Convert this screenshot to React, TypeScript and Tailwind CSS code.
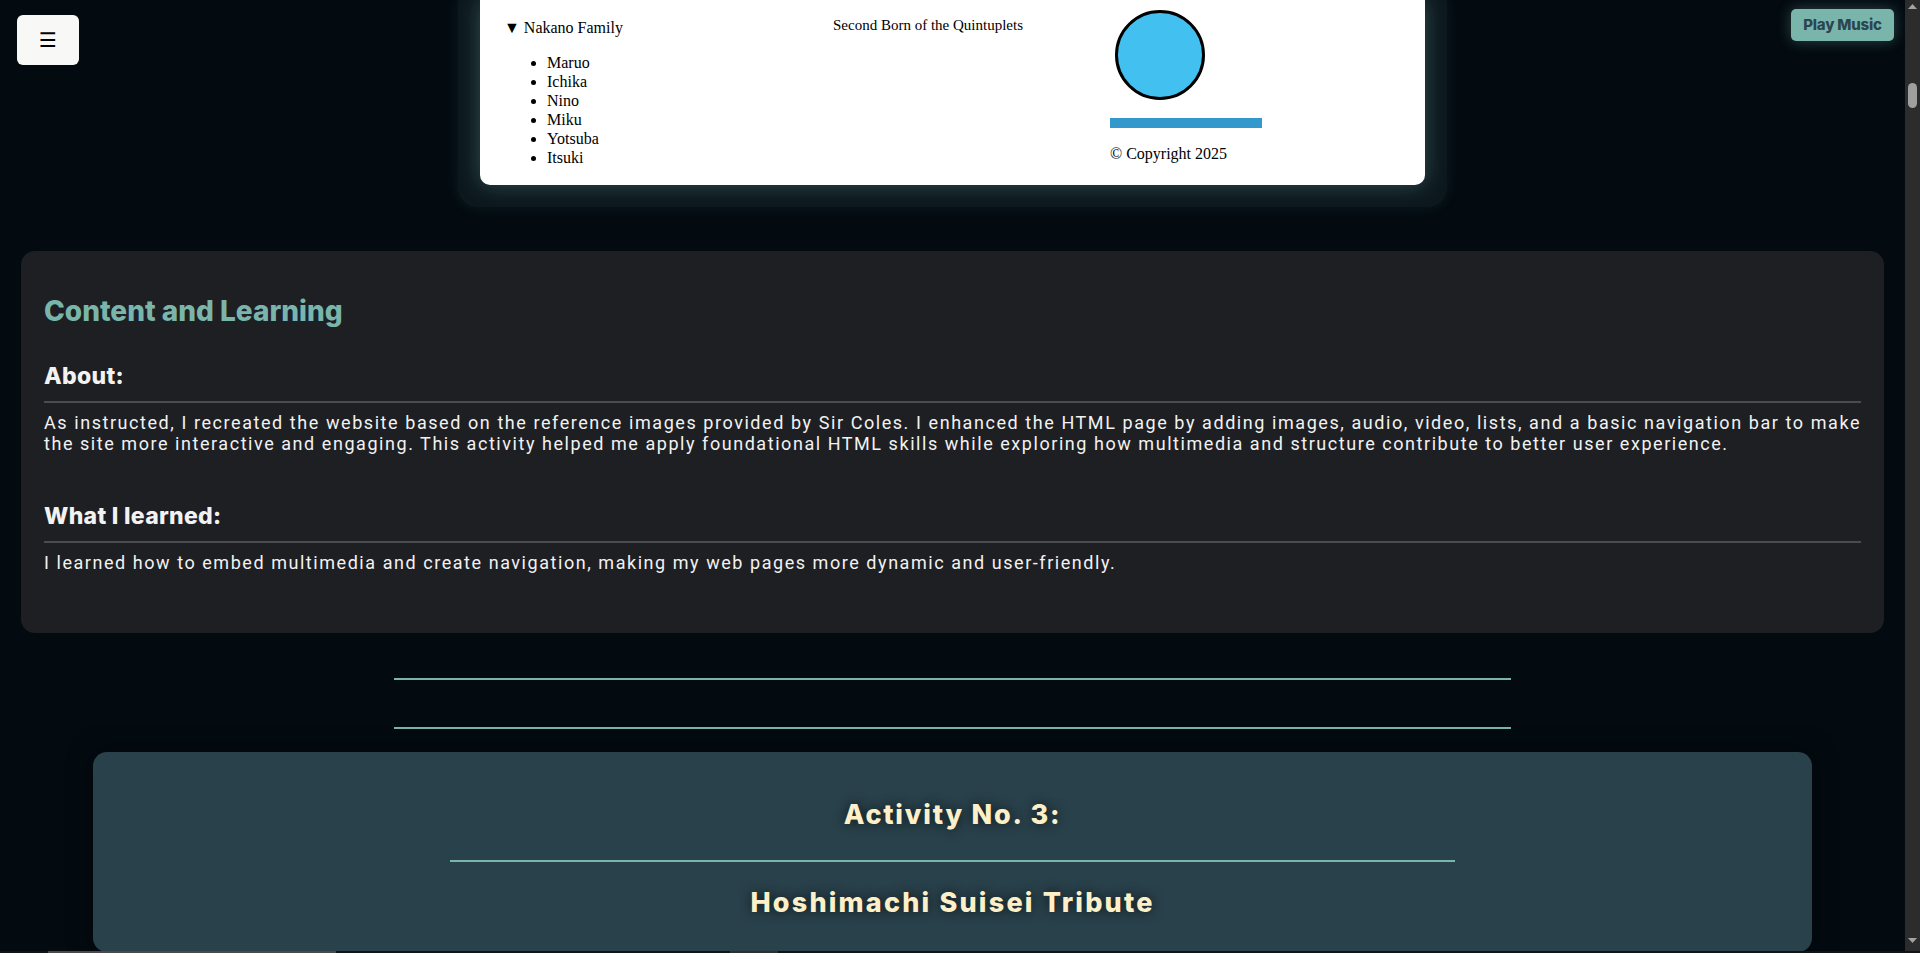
import React from "react";

const family = ["Maruo", "Ichika", "Nino", "Miku", "Yotsuba", "Itsuki"];

function Preview() {
  return (
    <div className="mx-auto w-[989px] shrink-0 rounded-b-[20px] bg-[#0c181e] px-[22px] pb-[22px] shadow-[0_0_14px_rgba(122,181,171,0.1)]">
      <div className="flex h-[185px] rounded-b-[10px] bg-white pl-[27px] font-['Liberation_Serif',serif] text-black shadow-[0_0_22px_rgba(122,181,171,0.35)]">
        <div className="w-[326px] pt-[19px] text-[16px] leading-[18px]">
          <div className="-ml-[3px]">▼ Nakano Family</div>
          <ul className="mt-[16px] list-disc pl-[40px] leading-[19px]">
            {family.map((name) => (
              <li key={name}>{name}</li>
            ))}
          </ul>
        </div>
        <div className="w-[277px] pt-[16px] text-[15px] leading-[18px]">Second Born of the Quintuplets</div>
        <div className="pt-[10px]">
          <div className="ml-[5px] h-[90px] w-[90px] rounded-full border-[3px] border-black bg-[#42c0ef]" />
          <div className="mt-[18px] h-[10px] w-[152px] bg-[#3399cc]" />
          <div className="mt-[17px] text-[16px] leading-[18px]">© Copyright 2025</div>
        </div>
      </div>
    </div>
  );
}

function LearningCard() {
  return (
    <section className="mx-[21px] mt-[44px] rounded-[14px] bg-[#1e1f23] px-[23px] pt-[43px] pb-[60px] text-[#f2f2f2]">
      <h2 className="font-['Inter',sans-serif] text-[28px] font-extrabold leading-[34px] text-[#7ab5ab]">Content and Learning</h2>
      <h3 className="mt-[35px] font-['Inter',sans-serif] text-[23px] font-extrabold leading-[26px] tracking-[0.3px]">About:</h3>
      <div className="mt-[12px] h-[2px] bg-[#4b4c50]" />
      <p className="mt-[9px] text-justify font-['Roboto',sans-serif] text-[18px] leading-[21px] tracking-[1.55px]">
        As instructed, I recreated the website based on the reference images provided by Sir Coles. I enhanced the HTML page by adding images, audio, video, lists, and a basic navigation bar to make the site more interactive and engaging. This activity helped me apply foundational HTML skills while exploring how multimedia and structure contribute to better user experience.
      </p>
      <h3 className="mt-[49px] font-['Inter',sans-serif] text-[23px] font-extrabold leading-[26px] tracking-[0.3px]">What I learned:</h3>
      <div className="mt-[12px] h-[2px] bg-[#4b4c50]" />
      <p className="mt-[9px] text-justify font-['Roboto',sans-serif] text-[18px] leading-[21px] tracking-[1.55px]">
        I learned how to embed multimedia and create navigation, making my web pages more dynamic and user-friendly.
      </p>
    </section>
  );
}

function ActivityCard() {
  return (
    <section className="mx-[93px] mt-[23px] h-[200px] shrink-0 rounded-[14px] bg-[#29414b] pt-[47px] text-center font-['Inter',sans-serif] font-extrabold text-[#fdf0c8] shadow-[0_0_24px_rgba(0,0,0,0.6)]">
      <h2 className="text-[27px] leading-[32px] tracking-[1.8px] [text-shadow:0_0_12px_rgba(0,0,0,0.7)]">Activity No. 3:</h2>
      <div className="mx-auto mt-[29px] h-[2px] w-[1005px] bg-[#7ab5ab]" />
      <h2 className="mt-[25px] text-[27px] leading-[32px] tracking-[2.2px] [text-shadow:0_0_12px_rgba(0,0,0,0.7)]">Hoshimachi Suisei Tribute</h2>
    </section>
  );
}

function Scrollbar() {
  return (
    <div className="flex h-[951px] w-[15px] shrink-0 flex-col items-center bg-[#2c2c2c]">
      <svg width="9" height="5" viewBox="0 0 9 5" className="mt-[4px]">
        <path d="M0 5 L4.5 0 L9 5 Z" fill="#a3a3a3" />
      </svg>
      <div className="mt-[74px] h-[25px] w-[9px] rounded-full bg-[#9f9f9f]" />
      <div className="flex-1" />
      <svg width="9" height="5" viewBox="0 0 9 5" className="mb-[8px]">
        <path d="M0 0 L9 0 L4.5 5 Z" fill="#a3a3a3" />
      </svg>
    </div>
  );
}

export default function App() {
  return (
    <div className="relative h-[953px] w-[1920px] overflow-hidden bg-[#030b11]">
      <div className="flex">
        <main className="flex h-[951px] w-[1905px] flex-col overflow-hidden">
          <Preview />
          <LearningCard />
          <div className="mx-auto mt-[45px] h-[2px] w-[1117px] shrink-0 bg-[#7ab5ab]" />
          <div className="mx-auto mt-[47px] h-[2px] w-[1117px] shrink-0 bg-[#7ab5ab]" />
          <ActivityCard />
        </main>
        <Scrollbar />
      </div>
      <div className="flex h-[2px] bg-[#111416]">
        <div className="ml-[48px] w-[288px] bg-[#4a4a4a]" />
        <div className="ml-[394px] w-[48px] bg-[#2e2e2e]" />
      </div>

      <button className="absolute left-[17px] top-[15px] flex h-[50px] w-[62px] items-center justify-center rounded-[6px] bg-[#f8f8f6] font-['DejaVu_Sans',sans-serif] text-[20px] text-black">
        ☰
      </button>
      <button className="absolute left-[1791px] top-[9px] h-[32px] w-[103px] rounded-[5px] bg-[#7ab5ab] font-['Inter',sans-serif] text-[15px] font-extrabold tracking-[-0.2px] text-[#2b4650] shadow-[0_0_14px_rgba(122,181,171,0.35)]">
        Play Music
      </button>
    </div>
  );
}
